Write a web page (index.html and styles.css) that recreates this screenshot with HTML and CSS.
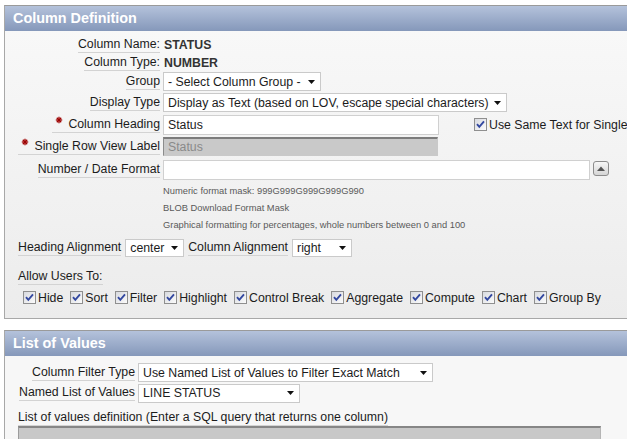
FILE: index.html
```html
<!DOCTYPE html>
<html>
<head>
<meta charset="utf-8">
<title>Column Definition</title>
<link rel="stylesheet" href="styles.css">
</head>
<body>
<div class="page">
  <section class="panel">
    <div class="panel-hd">Column Definition</div>
    <div class="panel-bd bd-1">
      <div class="form form-1">
        <div class="row h18"><div class="lbl"><span class="u">Column Name:</span></div><div class="val">STATUS</div></div>
        <div class="row h17"><div class="lbl"><span class="u">Column Type:</span></div><div class="val">NUMBER</div></div>
        <div class="row h21"><div class="lbl"><span class="u">Group</span></div>
          <div class="sel w-group"><span>- Select Column Group -</span><svg class="arr" width="7" height="4" viewBox="0 0 7 4"><path d="M0 0H7L3.5 4Z"/></svg></div>
        </div>
        <div class="row h21"><div class="lbl"><span class="u">Display Type</span></div>
          <div class="sel w-display"><span>Display as Text (based on LOV, escape special characters)</span><svg class="arr" width="7" height="4" viewBox="0 0 7 4"><path d="M0 0H7L3.5 4Z"/></svg></div>
        </div>
        <div class="row h23"><div class="lbl"><span class="u"><svg class="req" width="16" height="9" viewBox="0 0 16 9"><g><line x1="7" y1="0.8" x2="7" y2="7.2"/><line x1="3.8" y1="4" x2="10.2" y2="4"/><line x1="4.8" y1="1.8" x2="9.2" y2="6.2"/><line x1="9.2" y1="1.8" x2="4.8" y2="6.2"/></g></svg>Column Heading</span></div>
          <div class="ctl">
            <div class="inp w-heading">Status</div>
            <label class="cb same"><span class="chk"><svg width="11" height="11" viewBox="0 0 11 11"><path d="M2 5.2 L4.3 7.8 L9 2.4"/></svg></span>Use Same Text for Single</label>
          </div>
        </div>
        <div class="row h21"><div class="lbl"><span class="u"><svg class="req" width="16" height="9" viewBox="0 0 16 9"><g><line x1="7" y1="0.8" x2="7" y2="7.2"/><line x1="3.8" y1="4" x2="10.2" y2="4"/><line x1="4.8" y1="1.8" x2="9.2" y2="6.2"/><line x1="9.2" y1="1.8" x2="4.8" y2="6.2"/></g></svg>Single Row View Label</span></div>
          <div class="inp inp-dis w-single">Status</div>
        </div>
        <div class="row h26"><div class="lbl"><span class="u">Number / Date Format</span></div>
          <div class="ctl top">
            <div class="inp w-format"></div>
            <div class="upbtn"><svg width="8" height="5" viewBox="0 0 8 5"><path d="M0 5L4 0.5L8 5Z"/></svg></div>
          </div>
        </div>
      </div>
      <div class="help">
        <div>Numeric format mask: 999G999G999G999G990</div>
        <div>BLOB Download Format Mask</div>
        <div>Graphical formatting for percentages, whole numbers between 0 and 100</div>
      </div>
      <div class="arow">
        <span class="u">Heading Alignment</span>
        <div class="sel w-center"><span>center</span><svg class="arr" width="7" height="4" viewBox="0 0 7 4"><path d="M0 0H7L3.5 4Z"/></svg></div>
        <span class="u">Column Alignment</span>
        <div class="sel w-right"><span>right</span><svg class="arr" width="7" height="4" viewBox="0 0 7 4"><path d="M0 0H7L3.5 4Z"/></svg></div>
      </div>
      <div class="allow"><span class="u">Allow Users To:</span></div>
      <div class="cbrow">
        <label class="cb"><span class="chk"><svg width="11" height="11" viewBox="0 0 11 11"><path d="M2 5.2 L4.3 7.8 L9 2.4"/></svg></span>Hide</label>
        <label class="cb"><span class="chk"><svg width="11" height="11" viewBox="0 0 11 11"><path d="M2 5.2 L4.3 7.8 L9 2.4"/></svg></span>Sort</label>
        <label class="cb"><span class="chk"><svg width="11" height="11" viewBox="0 0 11 11"><path d="M2 5.2 L4.3 7.8 L9 2.4"/></svg></span>Filter</label>
        <label class="cb"><span class="chk"><svg width="11" height="11" viewBox="0 0 11 11"><path d="M2 5.2 L4.3 7.8 L9 2.4"/></svg></span>Highlight</label>
        <label class="cb"><span class="chk"><svg width="11" height="11" viewBox="0 0 11 11"><path d="M2 5.2 L4.3 7.8 L9 2.4"/></svg></span>Control Break</label>
        <label class="cb"><span class="chk"><svg width="11" height="11" viewBox="0 0 11 11"><path d="M2 5.2 L4.3 7.8 L9 2.4"/></svg></span>Aggregate</label>
        <label class="cb"><span class="chk"><svg width="11" height="11" viewBox="0 0 11 11"><path d="M2 5.2 L4.3 7.8 L9 2.4"/></svg></span>Compute</label>
        <label class="cb"><span class="chk"><svg width="11" height="11" viewBox="0 0 11 11"><path d="M2 5.2 L4.3 7.8 L9 2.4"/></svg></span>Chart</label>
        <label class="cb"><span class="chk"><svg width="11" height="11" viewBox="0 0 11 11"><path d="M2 5.2 L4.3 7.8 L9 2.4"/></svg></span>Group By</label>
      </div>
    </div>
  </section>

  <section class="panel">
    <div class="panel-hd">List of Values</div>
    <div class="panel-bd bd-2">
      <div class="form form-2">
        <div class="row h21"><div class="lbl"><span class="u">Column Filter Type</span></div>
          <div class="sel w-filter"><span>Use Named List of Values to Filter Exact Match</span><svg class="arr" width="7" height="4" viewBox="0 0 7 4"><path d="M0 0H7L3.5 4Z"/></svg></div>
        </div>
        <div class="row h20"><div class="lbl"><span class="u">Named List of Values</span></div>
          <div class="sel w-named"><span>LINE STATUS</span><svg class="arr" width="7" height="4" viewBox="0 0 7 4"><path d="M0 0H7L3.5 4Z"/></svg></div>
        </div>
      </div>
      <div class="deflbl"><span class="u">List of values definition (Enter a SQL query that returns one column)</span></div>
      <div class="ta"></div>
    </div>
  </section>
</div>
</body>
</html>
```

FILE: styles.css
```css
html, body {
  margin: 0;
  padding: 0;
  background: #ffffff;
}
body {
  font-family: "Liberation Sans", Arial, Helvetica, sans-serif;
  font-size: 12.3px;
  color: #1c1c1c;
}
.page {
  width: 627px;
  height: 439px;
  overflow: hidden;
  padding-top: 5px;
  box-sizing: border-box;
}
.panel {
  margin-left: 4px;
  width: 680px;
  border: 1px solid #a8a8a8;
  border-top-color: #9a9a9a;
}
.panel + .panel {
  margin-top: 11px;
}
.panel-hd {
  height: 25px;
  line-height: 25px;
  padding-left: 8px;
  background: linear-gradient(#b4c2db, #8598ba);
  color: #ffffff;
  font-weight: bold;
  font-size: 14.4px;
}
.bd-1 {
  background: linear-gradient(#f8f8f8, #ececec);
  padding: 5px 0 12px 13px;
}
.bd-2 {
  background: #f7f7f7;
  padding: 6px 0 0 13px;
  height: 120px;
}

/* form rows */
.row {
  display: flex;
  align-items: center;
  gap: 3px;
}
.h17 { height: 17px; }
.h18 { height: 18px; }
.h20 { height: 20px; }
.h21 { height: 21px; }
.h23 { height: 23px; }
.h26 { height: 26px; }

.lbl {
  flex: none;
  text-align: right;
}
.form-1 .lbl { width: 142px; }
.form-2 .lbl { width: 117px; }

.u {
  display: inline-block;
  line-height: 15px;
  border-bottom: 1px solid #d3d3d3;
  white-space: nowrap;
}
.req {
  vertical-align: top;
  margin-top: -1px;
}
.req g {
  stroke: #9e0000;
  stroke-width: 1.3;
}
.val {
  font-weight: bold;
  color: #333333;
  padding-left: 1px;
}

/* fake selects */
.sel {
  flex: none;
  display: flex;
  align-items: center;
  justify-content: space-between;
  box-sizing: border-box;
  height: 19px;
  border: 1px solid #cacaca;
  background: #ffffff;
  padding: 0 5px 0 4px;
  white-space: nowrap;
  color: #1c1c1c;
}
.sel .arr path { fill: #111111; }
.w-group { width: 158px; }
.w-display { width: 344px; }
.w-center { width: 59px; height: 18px; }
.w-right { width: 60px; height: 18px; }
.w-filter { width: 295px; }
.w-named { width: 162px; }

/* inputs */
.ctl {
  display: flex;
  align-items: center;
}
.ctl.top {
  align-items: flex-start;
}
.inp {
  box-sizing: border-box;
  height: 20px;
  border: 1px solid #d0d0d0;
  background: #ffffff;
  padding-left: 4px;
  display: flex;
  align-items: center;
}
.w-heading { width: 276px; }
.w-single { width: 275px; }
.w-format { width: 427px; }
.inp-dis {
  height: 19px;
  background: #c9c9c9;
  border: 1px solid #c9c9c9;
  border-top: 2px solid #7c7c7c;
  border-left-color: #8c8c8c;
  color: #8a8a8a;
}
.upbtn {
  width: 16px;
  height: 15px;
  box-sizing: border-box;
  margin: 1px 0 0 3px;
  border: 1px solid #8c8c8c;
  border-radius: 3px;
  background: linear-gradient(#f7f7f7, #d5d5d5);
  display: flex;
  align-items: center;
  justify-content: center;
}
.upbtn path { fill: #555555; }

/* checkboxes */
.cb {
  display: flex;
  align-items: center;
  white-space: nowrap;
}
.chk {
  flex: none;
  width: 13px;
  height: 13px;
  box-sizing: border-box;
  border: 1px solid #8f8f8f;
  background: linear-gradient(135deg, #d8dadf, #fbfbfb);
  margin-right: 2px;
  display: flex;
}
.chk path {
  fill: none;
  stroke: #3348a0;
  stroke-width: 1.9;
}
.same {
  margin-left: 35px;
}

/* help lines */
.help {
  margin-left: 145px;
  font-size: 9.35px;
  line-height: 17px;
  color: #5a5a5a;
}

.arow {
  display: flex;
  align-items: center;
  gap: 4px;
  height: 20px;
  margin-top: 4px;
}
.allow {
  height: 16px;
  margin-top: 11px;
}
.cbrow {
  display: flex;
  align-items: center;
  gap: 7px;
  height: 17px;
  margin-top: 4px;
  padding-left: 5px;
}

.deflbl {
  margin-top: 7px;
  height: 16px;
}
.ta {
  width: 583px;
  height: 40px;
  box-sizing: border-box;
  background: #c8c8c8;
  border-top: 2px solid #868686;
  border-left: 1px solid #9c9c9c;
  border-right: 1px solid #b5b5b5;
}
```
